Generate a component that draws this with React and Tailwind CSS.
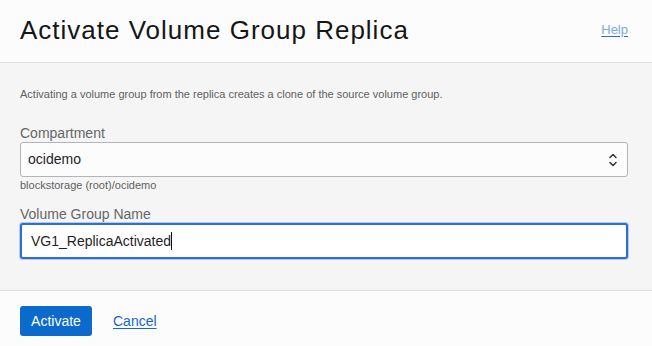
export default function App() {
  const font = { fontFamily: '"Liberation Sans", Arial, sans-serif' };
  return (
    <div className="w-[652px] h-[346px] bg-[#f5f5f5] flex flex-col overflow-hidden" style={font}>
      <div className="h-[63px] shrink-0 bg-[#fcfcfc] border-b border-[#e1e1e1] flex items-center justify-between pl-5 pr-6">
        <h1 className="text-[26px] leading-[30px] tracking-[1px] text-[#161616] mt-[-2px]">Activate Volume Group Replica</h1>
        <a href="#" className="text-[13px] leading-[16px] text-[#7ea9e0] underline decoration-[#2a6cc6] underline-offset-[2px] mt-[-2px]">Help</a>
      </div>
      <div className="flex-1 flex flex-col pl-5 pr-6 pt-[23px] border-b border-[#e0e0e0]">
        <p className="text-[11px] leading-[16px] text-[#616161]">Activating a volume group from the replica creates a clone of the source volume group.</p>
        <label className="mt-[22px] text-[14px] leading-[18px] text-[#666666]">Compartment</label>
        <div className="h-[35px] bg-[#fcfcfc] border border-[#b3b3bb] rounded-[3px] flex items-center justify-between pl-[7px] pr-[9px]">
          <span className="text-[14px] text-[#1f1f1f]">ocidemo</span>
          <svg width="10" height="16" viewBox="0 0 10 16" fill="none" stroke="#333" strokeWidth="1.5" strokeLinecap="round" strokeLinejoin="round">
            <path d="M2 5.5 L5 2.5 L8 5.5" />
            <path d="M2 10.5 L5 13.5 L8 10.5" />
          </svg>
        </div>
        <span className="text-[11px] leading-[16px] text-[#616161]">blockstorage (root)/ocidemo</span>
        <label className="mt-[12px] text-[14px] leading-[18px] text-[#666666]">Volume Group Name</label>
        <div className="h-[36px] bg-white border-2 border-[#2d6fcf] rounded-[3px] shadow-[0_0_0_1px_rgba(120,170,235,0.55)] flex items-center pl-[9px]">
          <span className="text-[14px] text-[#1f1f1f]">VG1_ReplicaActivated</span>
          <span className="w-px h-[18px] bg-[#111]" />
        </div>
      </div>
      <div className="h-[55px] shrink-0 bg-[#fcfcfc] flex items-start pl-5 pt-[15px] gap-[21px]">
        <button className="h-[30px] w-[72px] rounded-[3px] bg-[#0b6acb] text-white text-[14px]">Activate</button>
        <a href="#" className="mt-[6px] text-[14px] leading-[18px] text-[#1668c8] underline underline-offset-[2px]">Cancel</a>
      </div>
    </div>
  );
}
